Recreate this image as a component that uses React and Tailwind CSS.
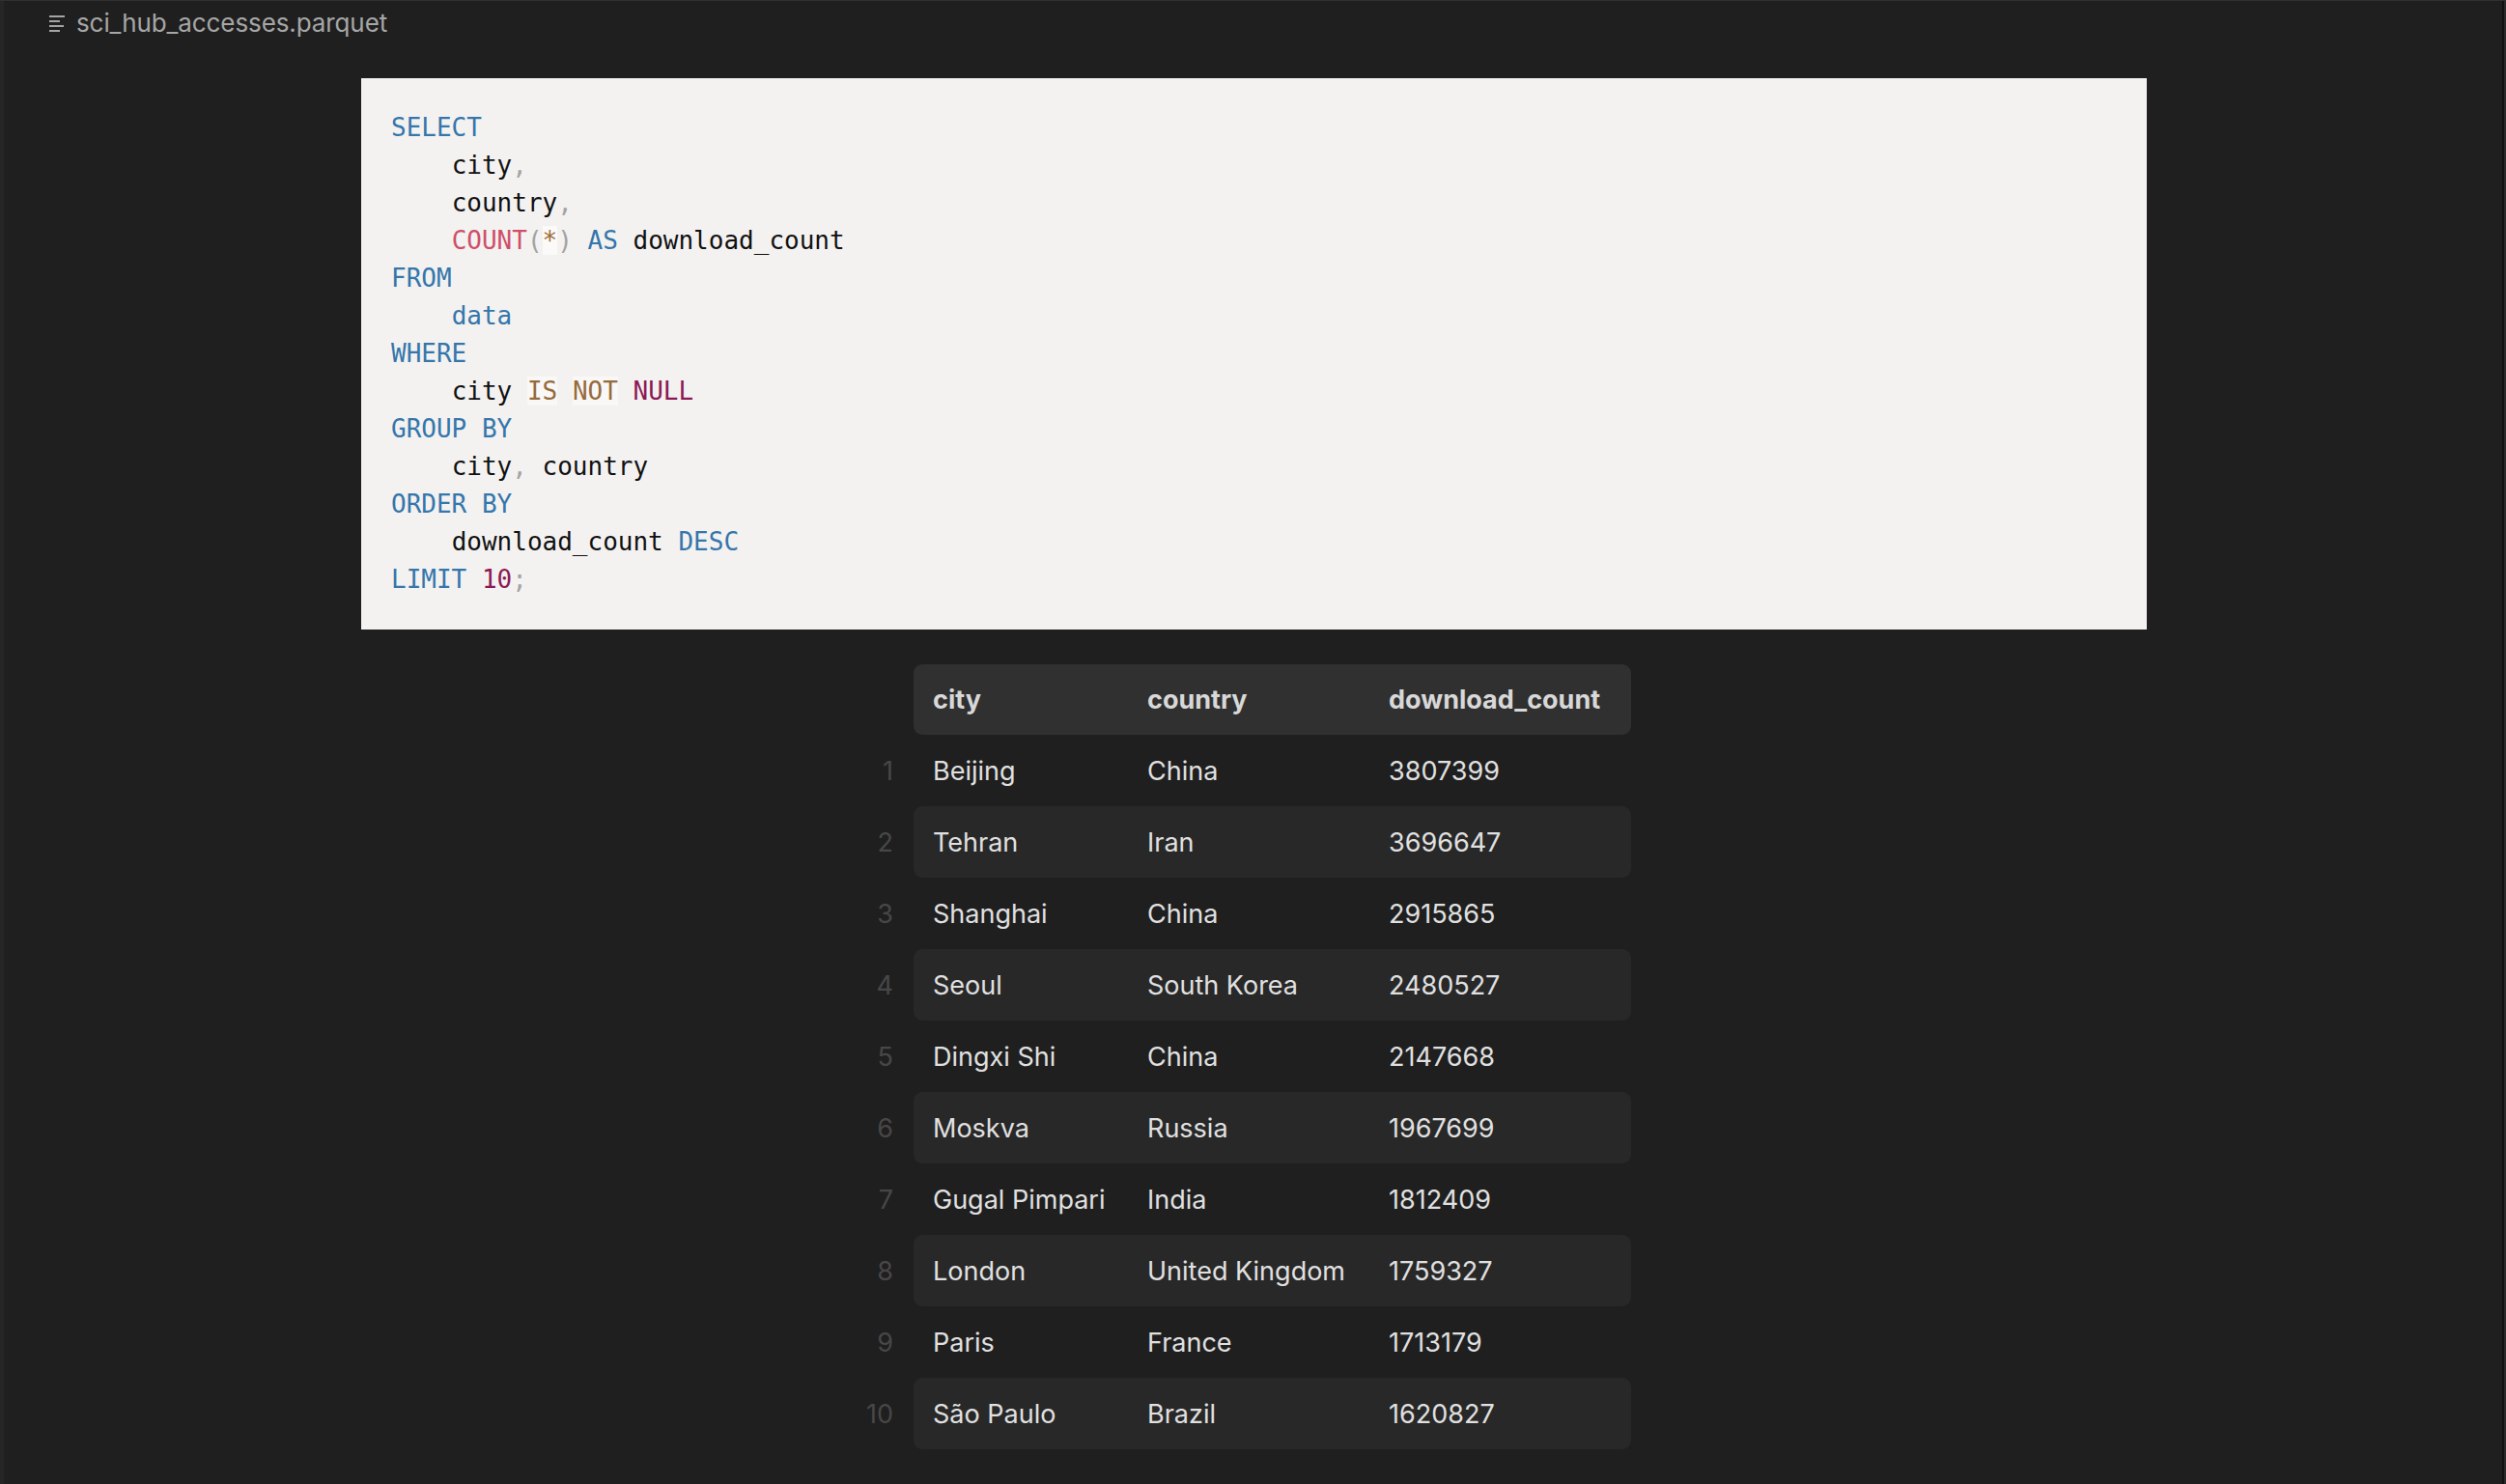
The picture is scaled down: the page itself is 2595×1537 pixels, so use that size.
const rows = [
  ['Beijing', 'China', '3807399'],
  ['Tehran', 'Iran', '3696647'],
  ['Shanghai', 'China', '2915865'],
  ['Seoul', 'South Korea', '2480527'],
  ['Dingxi Shi', 'China', '2147668'],
  ['Moskva', 'Russia', '1967699'],
  ['Gugal Pimpari', 'India', '1812409'],
  ['London', 'United Kingdom', '1759327'],
  ['Paris', 'France', '1713179'],
  ['São Paulo', 'Brazil', '1620827'],
];

const kw = 'text-[#3576ab]';
const punct = 'text-[#a3a3a3]';

function FileIcon() {
  return (
    <svg width="18" height="18" viewBox="0 0 18 18" className="shrink-0">
      <g stroke="#b4b4b4" strokeWidth="1.8">
        <line x1="1" y1="2" x2="17" y2="2" />
        <line x1="1" y1="7" x2="12" y2="7" />
        <line x1="1" y1="12" x2="16" y2="12" />
        <line x1="1" y1="17" x2="12" y2="17" />
      </g>
    </svg>
  );
}

function Code() {
  const I = '    ';
  return (
    <pre className="bg-[#f3f2f1] text-[#111] text-[26px] leading-[39px] pl-[31px] pt-[32px] pb-[32px] whitespace-pre" style={{ fontFamily: '"DejaVu Sans Mono", monospace' }}>
      <div><span className={kw}>SELECT</span></div>
      <div>{I}city<span className={punct}>,</span></div>
      <div>{I}country<span className={punct}>,</span></div>
      <div>
        {I}<span className="text-[#cf4f68]">COUNT</span><span className={punct}>(</span><span className="text-[#9d6c39] bg-[#fbfaf8]">*</span><span className={punct}>)</span> <span className={kw}>AS</span> download_count
      </div>
      <div><span className={kw}>FROM</span></div>
      <div>{I}<span className={kw}>data</span></div>
      <div><span className={kw}>WHERE</span></div>
      <div>
        {I}city <span className="text-[#966a3c] bg-[#f9f8f7]">IS</span> <span className="text-[#966a3c] bg-[#f9f8f7]">NOT</span> <span className="text-[#8c1954]">NULL</span>
      </div>
      <div><span className={kw}>GROUP BY</span></div>
      <div>{I}city<span className={punct}>,</span> country</div>
      <div><span className={kw}>ORDER BY</span></div>
      <div>{I}download_count <span className={kw}>DESC</span></div>
      <div>
        <span className={kw}>LIMIT</span> <span className="text-[#8c1954]">10</span><span className={punct}>;</span>
      </div>
    </pre>
  );
}

export default function App() {
  return (
    <div className="w-[2595px] h-[1537px] bg-[#1f1f1f] border-t border-[#303030] overflow-hidden flex" style={{ fontFamily: 'Inter, "Noto Sans", sans-serif' }}>
      <div className="w-[4px] bg-[#262626] shrink-0" />
      <div className="flex-1 flex flex-col">
        <div className="h-[45px] flex items-center gap-[11px] pl-[46px] text-[#a6a6a6] text-[26px]">
          <FileIcon />
          <span className="tracking-[-0.1px]">sci_hub_accesses.parquet</span>
        </div>
        <div className="pl-[370px] w-[2219px] mt-[35px]">
          <Code />
        </div>
        <div className="mt-[36px] pl-[888px]">
          <div className="flex flex-col text-[27px] text-[#e0e0e0]">
            <div className="flex items-center h-[73px]">
              <div className="w-[54px]" />
              <div className="flex items-center h-full pt-[2px] bg-[#303030] rounded-[9px] font-bold text-[#d8d8d8]">
                <div className="w-[222px] pl-[20px]">city</div>
                <div className="w-[250px] pl-[20px]">country</div>
                <div className="w-[271px] pl-[20px]">download_count</div>
              </div>
            </div>
            {rows.map((r, i) => (
              <div key={i} className="flex items-center h-[74px] pt-[2px]">
                <div className="w-[54px] pr-[21px] text-right text-[#474747]">{i + 1}</div>
                <div className={`flex items-center self-stretch -mt-[2px] pt-[2px] rounded-[9px] ${i % 2 === 1 ? 'bg-[#282828]' : ''}`}>
                  <div className="w-[222px] pl-[20px]">{r[0]}</div>
                  <div className="w-[250px] pl-[20px]">{r[1]}</div>
                  <div className="w-[271px] pl-[20px]">{r[2]}</div>
                </div>
              </div>
            ))}
          </div>
        </div>
      </div>
      <div className="w-[2px] bg-[#111] shrink-0" />
      <div className="w-[2px] bg-[#2a2a2a] shrink-0" />
    </div>
  );
}
